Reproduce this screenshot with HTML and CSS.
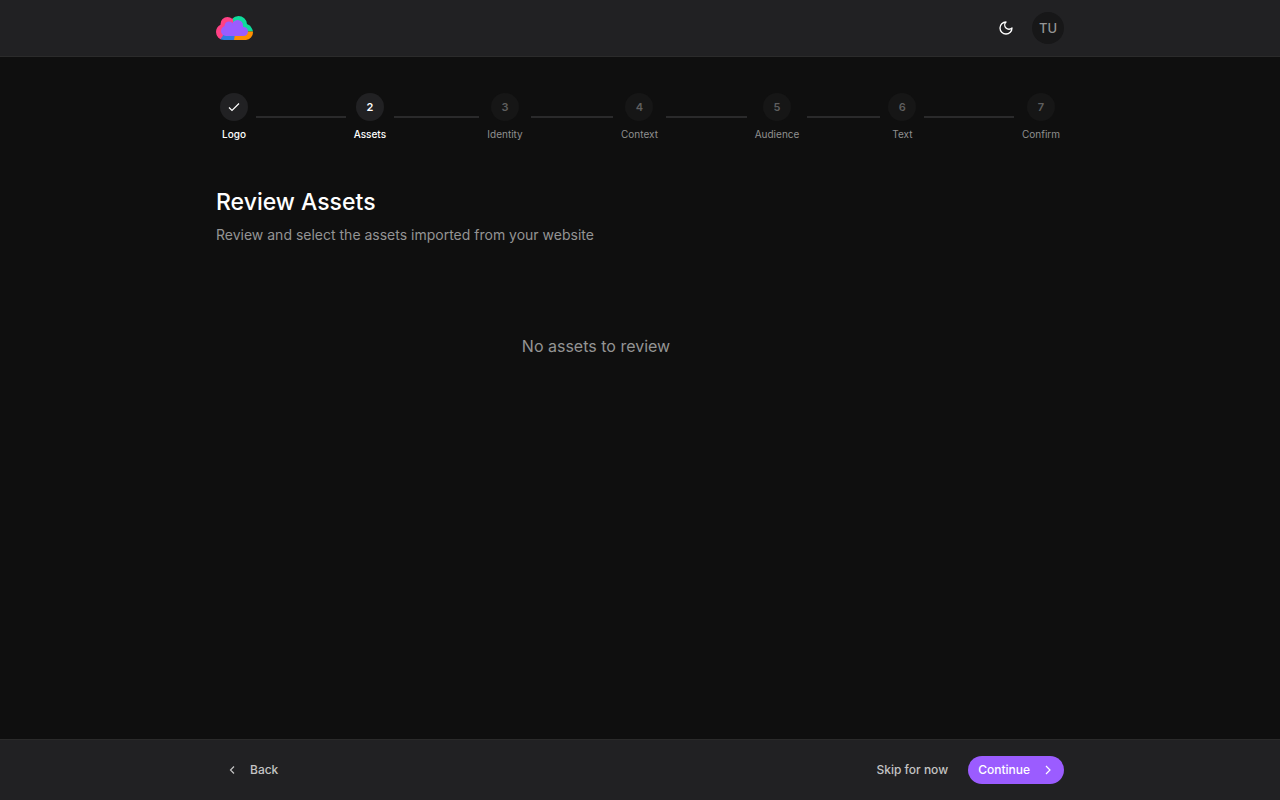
FILE: index.html
```html
<!DOCTYPE html>
<html lang="en">
<head>
    <meta charset="UTF-8">
    <meta name="viewport" content="width=device-width, initial-scale=1.0">
    <title>Review Assets</title>
    <link rel="stylesheet" href="styles.css">
</head>
<body>
    <header class="topbar">
        <div class="container topbar-inner">
            <a class="logo" href="#" aria-label="Home">
                <svg width="37" height="24" viewBox="0 0 37 24">
                    <defs>
                        <clipPath id="cloud">
                            <circle cx="8" cy="16" r="8"/>
                            <circle cx="11.500" cy="8" r="7"/>
                            <circle cx="22.500" cy="8.500" r="8.500"/>
                            <circle cx="29.500" cy="16.500" r="7.500"/>
                            <circle cx="28.500" cy="15.500" r="8"/>
                            <rect x="8" y="10" width="22" height="14"/>
                        </clipPath>
                    </defs>
                    <g clip-path="url(#cloud)">
                        <path fill="#ff4185" d="M0 0H17V12L4 24H0Z"/>
                        <path fill="#0fdc9c" d="M17 0H37V15.500H17Z"/>
                        <path fill="#ff8f00" d="M18 15.500H37V24H18Z"/>
                        <path fill="#2f7de1" d="M8 18H19L18 24H4Z"/>
                    </g>
                    <g fill="#9b5cff">
                        <circle cx="10" cy="15" r="5"/>
                        <circle cx="13" cy="10" r="4.500"/>
                        <circle cx="21.500" cy="9.500" r="5.500"/>
                        <circle cx="27.500" cy="15.500" r="4.500"/>
                        <rect x="10" y="10" width="17" height="10"/>
                    </g>
                </svg>
            </a>
            <div class="topbar-actions">
                <button class="icon-button" type="button" aria-label="Toggle theme">
                    <svg width="16" height="16" viewBox="0 0 24 24" fill="none" stroke="currentColor" stroke-width="2" stroke-linecap="round" stroke-linejoin="round">
                        <path d="M12 3a6 6 0 0 0 9 9 9 9 0 1 1-9-9Z"/>
                    </svg>
                </button>
                <button class="avatar" type="button">TU</button>
            </div>
        </div>
    </header>

    <main class="container content">
        <ol class="steps">
            <li class="step done">
                <div class="step-item">
                    <span class="step-circle">
                        <svg width="14" height="14" viewBox="0 0 14 14" fill="none" stroke="currentColor" stroke-width="1.200">
                            <path d="M2 7.500L5 10.500L12 3.500"/>
                        </svg>
                    </span>
                    <span class="step-label">Logo</span>
                </div>
            </li>
            <li class="step active" aria-current="step">
                <div class="step-item"><span class="step-circle">2</span><span class="step-label">Assets</span></div>
            </li>
            <li class="step">
                <div class="step-item"><span class="step-circle">3</span><span class="step-label">Identity</span></div>
            </li>
            <li class="step">
                <div class="step-item"><span class="step-circle">4</span><span class="step-label">Context</span></div>
            </li>
            <li class="step">
                <div class="step-item"><span class="step-circle">5</span><span class="step-label">Audience</span></div>
            </li>
            <li class="step">
                <div class="step-item"><span class="step-circle">6</span><span class="step-label">Text</span></div>
            </li>
            <li class="step">
                <div class="step-item"><span class="step-circle">7</span><span class="step-label">Confirm</span></div>
            </li>
        </ol>

        <section class="review">
            <h1>Review Assets</h1>
            <p class="subtitle">Review and select the assets imported from your website</p>
            <p class="empty">No assets to review</p>
        </section>
    </main>

    <footer class="bottombar">
        <div class="container bottombar-inner">
            <button class="button" type="button">
                <svg width="14" height="14" viewBox="0 0 14 14" fill="none" stroke="currentColor" stroke-width="1.200"><path d="M8 3.500L4.500 7L8 10.500"/></svg>
                Back
            </button>
            <div class="bottombar-actions">
                <button class="button" type="button">Skip for now</button>
                <button class="button primary" type="button">
                    Continue
                    <svg width="14" height="14" viewBox="0 0 14 14" fill="none" stroke="currentColor" stroke-width="1.200"><path d="M6 3L10 7L6 11"/></svg>
                </button>
            </div>
        </div>
    </footer>
</body>
</html>
```
FILE: styles.css
```css
* {
    box-sizing: border-box;
}

body {
    margin: 0;
    min-height: 100vh;
    display: flex;
    flex-direction: column;
    background-color: #0f0f0f;
    color: #fff;
    font-family: Inter, "Liberation Sans", sans-serif;
}

button {
    font-family: inherit;
    border: none;
    background: none;
    cursor: pointer;
}

.container {
    width: 100%;
    max-width: 880px;
    margin: 0 auto;
    padding: 0 16px;
}

.topbar {
    background-color: #212123;
    border-bottom: 1px solid #2b2b2b;
}

.topbar-inner {
    display: flex;
    align-items: center;
    justify-content: space-between;
    height: 56px;
}

.logo svg {
    display: block;
}

.topbar-actions {
    display: flex;
    align-items: center;
    gap: 10px;
}

.icon-button {
    display: flex;
    align-items: center;
    justify-content: center;
    width: 32px;
    height: 32px;
    padding: 0;
    color: #fff;
}

.avatar {
    width: 32px;
    height: 32px;
    padding: 0;
    border-radius: 50%;
    background-color: #171718;
    color: #949494;
    font-size: 13px;
    font-weight: 500;
}

.content {
    flex: 1;
}

.steps {
    display: flex;
    margin: 0;
    padding: 36px 0 0;
    list-style: none;
}

.step {
    display: flex;
    align-items: center;
    flex: 1;
    color: #8f8f8f;
}

.step:last-child {
    flex: none;
}

.step:not(:last-child)::after {
    content: "";
    flex: 1;
    height: 2px;
    margin: 0 4px;
    background-color: #2a2a2b;
}

.step-item {
    display: flex;
    flex-direction: column;
    align-items: center;
    gap: 6px;
    padding: 0 4px;
}

.step-circle {
    display: flex;
    align-items: center;
    justify-content: center;
    width: 28px;
    height: 28px;
    border-radius: 50%;
    background-color: #161616;
    color: #5f5f5f;
    font-size: 11px;
    font-weight: 600;
}

.step-label {
    font-size: 10px;
    line-height: 14px;
}

.done,
.active {
    color: #fff;
}

.done .step-label,
.active .step-label {
    font-weight: 500;
}

.done .step-circle,
.active .step-circle {
    background-color: #212123;
    color: #fff;
}

.review {
    max-width: 760px;
    padding-top: 44px;
}

h1 {
    margin: 0;
    font-size: 23px;
    font-weight: 500;
    line-height: 34px;
}

.subtitle {
    margin: 6px 0 0;
    color: #949494;
    font-size: 14px;
    line-height: 20px;
}

.empty {
    margin: 0;
    padding: 88px 0;
    color: #949494;
    font-size: 16px;
    line-height: 26px;
    text-align: center;
}

.bottombar {
    position: sticky;
    bottom: 0;
    background-color: #212123;
    border-top: 1px solid #2b2b2b;
}

.bottombar-inner {
    display: flex;
    align-items: center;
    justify-content: space-between;
    padding-top: 16px;
    padding-bottom: 16px;
}

.bottombar-actions {
    display: flex;
    align-items: center;
    gap: 10px;
}

.button {
    display: flex;
    align-items: center;
    gap: 10px;
    height: 28px;
    padding: 0 10px;
    border-radius: 14px;
    color: #c4c4c4;
    font-size: 12px;
    font-weight: 500;
    line-height: 16px;
}

.primary {
    background-color: #9b5cff;
    color: #fff;
}
```
